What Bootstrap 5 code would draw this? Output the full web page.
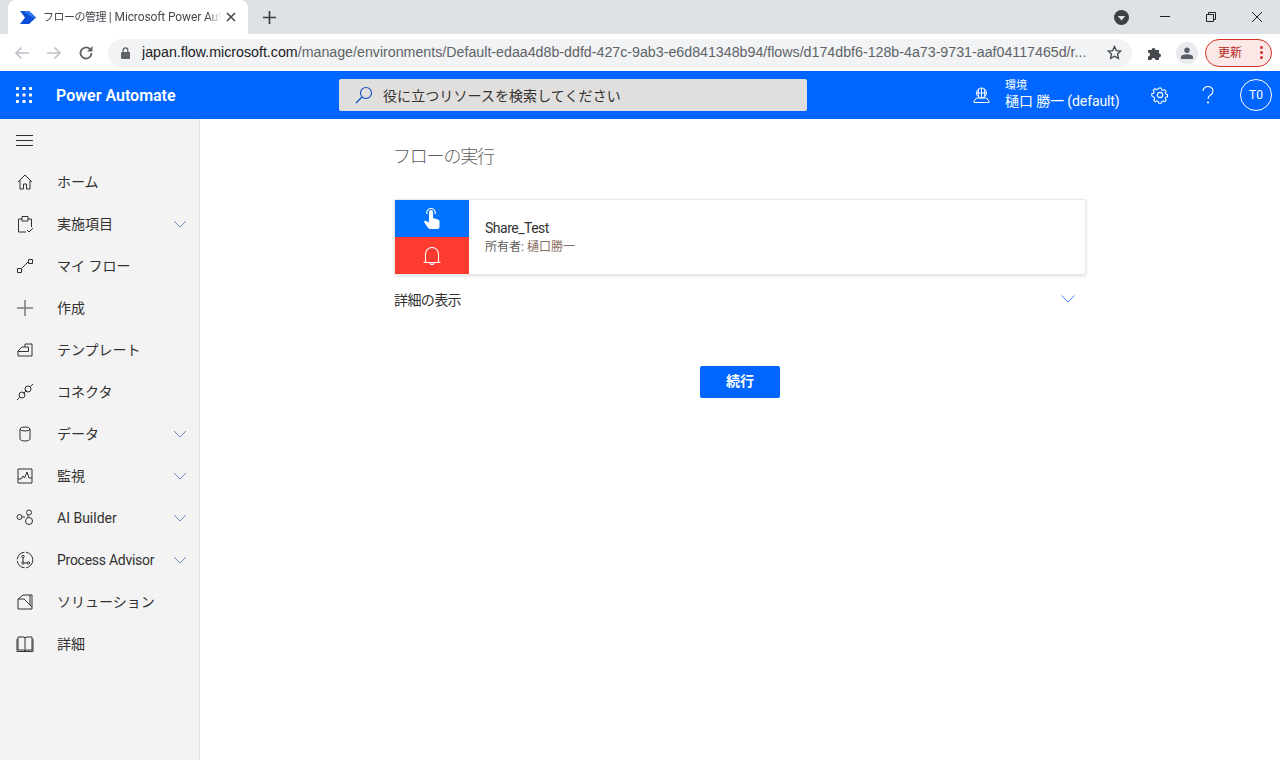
<!DOCTYPE html>
<html lang="ja">
<head>
<meta charset="utf-8">
<title>フローの管理</title>
<link href="https://cdn.jsdelivr.net/npm/bootstrap@5.3.0/dist/css/bootstrap.min.css" rel="stylesheet">
<style>
html,body{height:760px;overflow:hidden}
body{font-family:Roboto,"Noto Sans CJK JP",sans-serif;color:#323130;background:#fff;font-size:14px}
.tabstrip{height:34px;background:#dee1e6;padding-left:8px}
.brtab{width:240px;height:34px;background:#fff;border-radius:8px 8px 0 0;padding:0 12px}
.brtab-title{font-size:12px;color:#45494f;white-space:nowrap;margin-left:6px;width:178px;letter-spacing:-.12px;-webkit-mask-image:linear-gradient(90deg,#000 165px,transparent 178px);mask-image:linear-gradient(90deg,#000 165px,transparent 178px)}
.brtab-jp{font-size:11px;letter-spacing:-.5px}
.newtab{margin-left:15px}
.winbtn{width:46px;height:34px}
.profile-dot{margin-right:13px}
.toolbar{height:37px;background:#fff}
.navs{width:108px;padding-left:14px;gap:16px}
.omni{width:1024px;height:28px;background:#f1f3f4;border-radius:14px;padding:0 10px 0 13px}
.omni-url{font-family:"Liberation Sans",sans-serif;font-size:14.23px;color:#5f6368;white-space:nowrap;overflow:hidden;margin-left:12px;flex:1}
.omni-url b{font-weight:400;color:#202124}
.tray-puzzle{margin-left:15px}
.avatar-chip{width:22px;height:22px;border-radius:50%;background:#e8eaed;margin-left:13px}
.update-btn{width:67px;height:28px;border:1px solid #d93025;border-radius:14px;background:#fce8e6;color:#b3261e;font-size:12px;padding:0 8px 0 12px;margin-left:7px}
.dots3{gap:2px}
.dots3 i{display:block;width:3px;height:3px;border-radius:50%;background:#d93025}
.topbar{height:48px;background:#0066ff;color:#fff}
.waffle{width:48px}
.brand{width:291px;font-weight:600;font-size:16px;padding:2px 0 0 8px;white-space:nowrap}
.searchbox{width:468px;height:32px;background:#e1dfdd;border-radius:2px;padding-left:16px;color:#323130;font-size:14px}
.searchbox span{margin-left:10px;letter-spacing:.08px;padding-top:2px}
.envwrap{margin-left:auto}
.envtext{margin-left:15px;width:131px}
.envlabel{font-size:11px;line-height:13px;margin-top:-2px}
.envname{font-size:14px;line-height:17px;white-space:nowrap;letter-spacing:-.1px;margin-top:1px}
.topicon{width:48px;height:48px}
.initials{width:32px;height:32px;border:1px solid #fff;border-radius:50%;font-size:12px;margin:0 8px 0 8px}
.shell{height:641px}
.sidenav{width:200px;background:#f3f3f3;border-right:1px solid #e1dfdd;flex:none}
.burger{height:42px;padding-left:16px}
.navrow{height:42px;padding-left:16px;padding-right:12px;font-size:14px;color:#323130;white-space:nowrap}
.navrow svg.ico{width:18px;height:18px;margin-right:23px;flex:none}
.navrow .chev{margin-left:auto}
.tight-label{letter-spacing:-.27px}
.pane{flex:1;padding:0 194px 0 194px}
.flowtitle{font-size:18px;letter-spacing:-1.2px;font-weight:300;color:#605e5c;line-height:28px;margin:24px 0 28px -1px}
.flowcard{height:76px;border:1px solid #edebe9;box-shadow:0 1px 3px rgba(0,0,0,.14);border-radius:0;background:#fff}
.iconcol{width:74px;flex:none}
.icotop{height:37px;background:#0072ff}
.icobot{height:37px;background:#ff3b30}
.flowname{font-size:14px;line-height:18px;color:#323130;margin-bottom:2px;letter-spacing:-.5px}
.flowowner{font-size:12px;line-height:16px;color:#605e5c}
.flowowner em{font-style:normal;color:#8a6f62}
.flowinfo{padding-left:16px;padding-bottom:1px}
.detailrow{height:48px;padding-right:11px;font-size:14px;color:#323130}
.detailrow span{letter-spacing:-.6px;padding-top:2px}
.runbar{margin-top:43px}
.runbtn{width:80px;height:32px;background:#0066ff;border:0;border-radius:2px;color:#fff;font-weight:600;font-size:14px;padding:0 0 2px;line-height:30px}
.runbtn:hover{background:#0066ff;color:#fff}
</style>
</head>
<body class="d-flex flex-column m-0">

<div class="tabstrip d-flex align-items-end">
  <div class="brtab d-flex align-items-center">
    <svg width="17" height="13" viewBox="0 0 17 13"><path d="M0 0h9l7 6.500L9 13H0l5-6.500z" fill="#0f4fd8"/><path d="M3 0h6l7 6.500h-3z" fill="#2f7bf0"/></svg>
    <div class="brtab-title"><span class="brtab-jp">フローの管理</span> | Microsoft Power Aut</div>
    <svg class="ms-auto" width="10" height="10" viewBox="0 0 10 10"><path d="M1 1l8 8M9 1L1 9" stroke="#45494f" stroke-width="1.600"/></svg>
  </div>
  <div class="newtab d-flex align-items-center h-100">
    <svg width="13" height="13" viewBox="0 0 13 13"><path d="M6.500 0v13M0 6.500h13" stroke="#3c4043" stroke-width="1.700"/></svg>
  </div>
  <div class="ms-auto d-flex align-items-center">
    <svg class="profile-dot" width="15" height="15" viewBox="0 0 15 15"><circle cx="7.500" cy="7.500" r="7.500" fill="#3c4043"/><path d="M3.800 6h7.400L7.500 10.500z" fill="#dee1e6"/></svg>
    <div class="winbtn d-flex align-items-center justify-content-center"><svg width="10" height="10"><path d="M0 4.500h10" stroke="#202124"/></svg></div>
    <div class="winbtn d-flex align-items-center justify-content-center"><svg width="10" height="10"><path d="M.5 2.500h7v7h-7zM2.500 2.500v-2h7v7h-2" fill="none" stroke="#202124"/></svg></div>
    <div class="winbtn d-flex align-items-center justify-content-center"><svg width="10" height="10"><path d="M0 0l10 10M10 0L0 10" stroke="#202124"/></svg></div>
  </div>
</div>

<div class="toolbar d-flex align-items-center">
  <div class="navs d-flex align-items-center">
    <svg width="16" height="14" viewBox="0 0 16 14"><path d="M15 7H2M7.500 1.500L2 7l5.500 5.500" fill="none" stroke="#bdc1c6" stroke-width="1.600"/></svg>
    <svg width="16" height="14" viewBox="0 0 16 14"><path d="M1 7h13M8.500 1.500L14 7l-5.500 5.500" fill="none" stroke="#bdc1c6" stroke-width="1.600"/></svg>
    <svg width="16" height="16" viewBox="0 0 16 16"><path d="M13.500 8a5.500 5.500 0 1 1-1.700-4" fill="none" stroke="#5f6368" stroke-width="1.800"/><path d="M14.500 1v5.500H9z" fill="#5f6368"/></svg>
  </div>
  <div class="omni d-flex align-items-center">
    <svg width="9" height="12" viewBox="0 0 9 12"><path d="M1 5h7a1 1 0 0 1 1 1v5a1 1 0 0 1-1 1H1a1 1 0 0 1-1-1V6a1 1 0 0 1 1-1z" fill="#5f6368"/><path d="M2.200 5V3.200a2.300 2.300 0 0 1 4.600 0V5" fill="none" stroke="#5f6368" stroke-width="1.300"/></svg>
    <div class="omni-url"><b>japan.flow.microsoft.com</b>/manage/environments/Default-edaa4d8b-ddfd-427c-9ab3-e6d841348b94/flows/d174dbf6-128b-4a73-9731-aaf04117465d/r...</div>
    <svg width="15" height="15" viewBox="0 0 16 16"><path d="M8 1.500l2 4.400 4.700.5-3.500 3.200 1 4.700L8 11.900l-4.200 2.400 1-4.700L1.300 6.400 6 5.900z" fill="none" stroke="#45494f" stroke-width="1.400"/></svg>
  </div>
  <svg class="tray-puzzle" width="16" height="16" viewBox="0 0 16 16"><path d="M1 5h3.500a2 2 0 1 1 4 0H12v3.500a2 2 0 1 1 0 4V15H8.500a2 2 0 1 0-4 0H1v-3.500a2 2 0 1 0 0-4z" fill="#45494f"/></svg>
  <div class="avatar-chip d-flex align-items-center justify-content-center"><svg width="12" height="12" viewBox="0 0 12 12"><circle cx="6" cy="3.200" r="2.700" fill="#5a5f68"/><path d="M0 12V10c0-1.800 3-2.800 6-2.800s6 1 6 2.800v2z" fill="#5a5f68"/></svg></div>
  <div class="update-btn d-flex align-items-center justify-content-between"><span>更新</span><span class="dots3 d-flex flex-column"><i></i><i></i><i></i></span></div>
</div>

<header class="topbar d-flex align-items-center">
  <div class="waffle d-flex justify-content-center">
    <svg width="16" height="16" viewBox="0 0 16 16" fill="#fff"><rect width="3" height="3" rx=".5"/><rect x="6.500" width="3" height="3" rx=".5"/><rect x="13" width="3" height="3" rx=".5"/><rect y="6.500" width="3" height="3" rx=".5"/><rect x="6.500" y="6.500" width="3" height="3" rx=".5"/><rect x="13" y="6.500" width="3" height="3" rx=".5"/><rect y="13" width="3" height="3" rx=".5"/><rect x="6.500" y="13" width="3" height="3" rx=".5"/><rect x="13" y="13" width="3" height="3" rx=".5"/></svg>
  </div>
  <div class="brand">Power Automate</div>
  <div class="searchbox d-flex align-items-center">
    <svg width="18" height="18" viewBox="0 0 18 18"><circle cx="11" cy="7" r="5.500" fill="none" stroke="#0f4fc4" stroke-width="1.100"/><path d="M7 11l-6 6" stroke="#0f4fc4" stroke-width="1.200"/></svg>
    <span>役に立つリソースを検索してください</span>
  </div>
  <div class="envwrap d-flex align-items-center">
    <svg width="17" height="17" viewBox="0 0 17 17" fill="none" stroke="#fff"><circle cx="8.500" cy="6" r="5"/><path d="M3.500 6h10M8.500 1v10M6 1.800c-1 2.800-1 5.600 0 8.400M11 1.800c1 2.800 1 5.600 0 8.400M1 14l2.500-3h10l2.500 3v1.500H1z"/></svg>
    <div class="envtext">
      <div class="envlabel">環境</div>
      <div class="envname">樋口 勝一 (default)</div>
    </div>
    <div class="topicon d-flex align-items-center justify-content-center">
      <svg width="18" height="18" viewBox="0 0 18 18" fill="none" stroke="#fff" stroke-width="1.200"><circle cx="9" cy="9" r="2.700"/><path d="M7.600 1h2.800l.5 2.200 1.500.7 2-1.100 2 2-1.200 1.900.7 1.500 2.100.5v2.800l-2.100.5-.7 1.500 1.200 1.900-2 2-2-1.100-1.500.7-.5 2.200H7.600l-.5-2.200-1.500-.7-2 1.100-2-2 1.200-1.900-.7-1.500L-.7 10.500V7.700l2.100-.5.700-1.500L.9 3.800l2-2 2 1.100 1.500-.7z" transform="translate(1.400 1.200) scale(.84)"/></svg>
    </div>
    <div class="topicon d-flex align-items-center justify-content-center">
      <svg width="12" height="18" viewBox="0 0 12 18" fill="none" stroke="#fff" stroke-width="1.100"><path d="M1 5a5 4.500 0 1 1 7.500 3.900C6.500 10 6 11 6 13"/><circle cx="6" cy="16.500" r=".5" fill="#fff"/></svg>
    </div>
    <div class="initials d-flex align-items-center justify-content-center">T0</div>
  </div>
</header>

<div class="shell d-flex">
  <nav class="sidenav d-flex flex-column">
    <div class="burger d-flex align-items-center">
      <svg width="17" height="11" viewBox="0 0 17 11"><path d="M0 .5h17M0 5.500h17M0 10.500h17" stroke="#323130"/></svg>
    </div>
    <div>
      <div class="navrow d-flex align-items-center">
        <svg class="ico" viewBox="0 0 18 18" fill="none" stroke="#323130"><path d="M2 9l7-7 7 7M4 7.500V16h3.500v-5h3v5H14V7.500"/></svg>ホーム</div>
      <div class="navrow d-flex align-items-center">
        <svg class="ico" viewBox="0 0 18 18" fill="none" stroke="#323130"><path d="M6 4H2.500v13H10M12 4h3.500v8M6 1.500h6V6H6zM11 15l2 2 4-4"/></svg>実施項目
        <svg class="chev" width="14" height="8" viewBox="0 0 14 8"><path d="M1 1l6 6 6-6" fill="none" stroke="#6b87c4"/></svg></div>
      <div class="navrow d-flex align-items-center">
        <svg class="ico" viewBox="0 0 18 18" fill="none" stroke="#323130"><path d="M1.500 11.500h4v4h-4zM12.500 2.500h4v4h-4zM6 11l6-6"/></svg>マイ フロー</div>
      <div class="navrow d-flex align-items-center">
        <svg class="ico" viewBox="0 0 18 18" fill="none" stroke="#7d7b79" stroke-width="1.500"><path d="M1 9h16M9 1v16"/></svg>作成</div>
      <div class="navrow d-flex align-items-center">
        <svg class="ico" viewBox="0 0 18 18" fill="none" stroke="#323130"><path d="M2 10l4-4h3V3h7v12H2zM9 6h3.500v4.500H2"/></svg>テンプレート</div>
      <div class="navrow d-flex align-items-center">
        <svg class="ico" viewBox="0 0 18 18" fill="none" stroke="#323130"><path d="M1 17l2.500-2.500M14.500 3.500L17 1M7.500 10.500l3-3"/><circle cx="6" cy="12" r="3"/><circle cx="12" cy="6" r="3"/></svg>コネクタ</div>
      <div class="navrow d-flex align-items-center">
        <svg class="ico" viewBox="0 0 18 18" fill="none" stroke="#323130"><ellipse cx="9" cy="4" rx="5" ry="2"/><path d="M4 4v10c0 1.100 2.200 2 5 2s5-.9 5-2V4"/></svg>データ
        <svg class="chev" width="14" height="8" viewBox="0 0 14 8"><path d="M1 1l6 6 6-6" fill="none" stroke="#6b87c4"/></svg></div>
      <div class="navrow d-flex align-items-center">
        <svg class="ico" viewBox="0 0 18 18" fill="none" stroke="#323130"><path d="M2 2h14v14H2zM2 12h3l2-3 1.500 2L11 5l2 6h3"/></svg>監視
        <svg class="chev" width="14" height="8" viewBox="0 0 14 8"><path d="M1 1l6 6 6-6" fill="none" stroke="#6b87c4"/></svg></div>
      <div class="navrow d-flex align-items-center">
        <svg class="ico" viewBox="0 0 18 18" fill="none" stroke="#323130"><circle cx="3.500" cy="8" r="2.500"/><circle cx="13" cy="3.500" r="2.500"/><circle cx="13" cy="12" r="3.500"/><path d="M6 8h3M12 6v2.500"/></svg>AI Builder
        <svg class="chev" width="14" height="8" viewBox="0 0 14 8"><path d="M1 1l6 6 6-6" fill="none" stroke="#6b87c4"/></svg></div>
      <div class="navrow d-flex align-items-center">
        <svg class="ico" viewBox="0 0 18 18" fill="none" stroke="#323130"><circle cx="9" cy="9" r="7.800" stroke-dasharray="11 1.500"/><circle cx="7" cy="5.500" r="1.200"/><circle cx="7" cy="12" r="1.200"/><circle cx="12.500" cy="12" r="1.200"/><path d="M7 7v4M8.500 12h2.500"/></svg><span class="tight-label">Process Advisor</span>
        <svg class="chev" width="14" height="8" viewBox="0 0 14 8"><path d="M1 1l6 6 6-6" fill="none" stroke="#6b87c4"/></svg></div>
      <div class="navrow d-flex align-items-center">
        <svg class="ico" viewBox="0 0 18 18" fill="none" stroke="#323130"><path d="M2 6l5-4h9v14H2zM2 6h6l8 8M14 2v10"/></svg>ソリューション</div>
      <div class="navrow d-flex align-items-center">
        <svg class="ico" viewBox="0 0 18 18" fill="none" stroke="#323130"><path d="M2 2h6l1 1 1-1h6v13h-6l-1 1-1-1H2zM9 3v12M1 4v12.500h16V4"/></svg>詳細</div>
    </div>
  </nav>

  <main class="pane">
    <div class="flowtitle">フローの実行</div>
    <div class="flowcard d-flex">
      <div class="iconcol d-flex flex-column">
        <div class="icotop d-flex align-items-center justify-content-center">
          <svg width="16" height="22" viewBox="0 0 16 22"><path d="M5 4a2 2 0 0 1 4 0v6l5 1.500c1.200.5 1.500 1 1.500 2V19a2 2 0 0 1-2 2H6c-1 0-1.500-.5-2-1.200L.3 14.500c-.7-1 .3-2.300 1.500-1.700L5 14.500z" fill="#fff"/><path d="M3 6a4.200 4.200 0 1 1 8 0" fill="none" stroke="#fff" stroke-width="1.200"/></svg>
        </div>
        <div class="icobot d-flex align-items-center justify-content-center">
          <svg width="18" height="20" viewBox="0 0 18 20" fill="none" stroke="#fff" stroke-width="1.100"><path d="M.5 16.500h17M2.500 16.500V8a6.500 6.500 0 0 1 13 0v8.500M7 16.500a2 2 0 0 0 4 0"/></svg>
        </div>
      </div>
      <div class="flowinfo d-flex flex-column justify-content-center">
        <div class="flowname">Share_Test</div>
        <div class="flowowner">所有者: <em>樋口勝一</em></div>
      </div>
    </div>
    <div class="detailrow d-flex align-items-center justify-content-between">
      <span>詳細の表示</span>
      <svg width="14" height="8" viewBox="0 0 14 8"><path d="M.5.500L7 7 13.500.500" fill="none" stroke="#4d7fe8"/></svg>
    </div>
    <div class="runbar d-flex justify-content-center">
      <button type="button" class="btn runbtn">続行</button>
    </div>
  </main>
</div>
</body>
</html>
